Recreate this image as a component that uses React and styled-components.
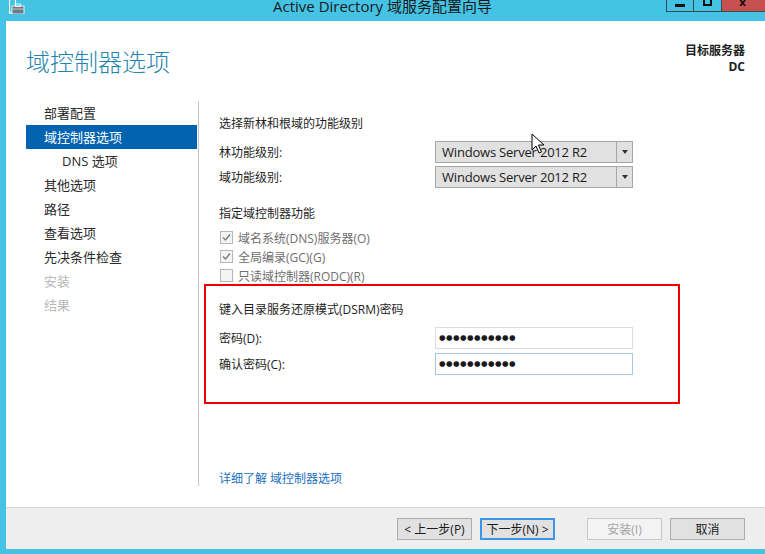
import React from 'react';
import styled, { createGlobalStyle } from 'styled-components';

const GlobalStyle = createGlobalStyle`
  html, body {
    margin: 0;
    padding: 0;
    overflow: hidden;
    background: #45c3e4;
  }
  * {
    box-sizing: border-box;
  }
`;

const SANS = `"Open Sans", "Noto Sans CJK SC", sans-serif`;

const Window = styled.div`
  position: relative;
  width: 765px;
  height: 554px;
  display: flex;
  flex-direction: column;
  background: #45c3e4;
  font-family: ${SANS};
  color: #1e1e1e;
  overflow: hidden;
`;

const TitleBar = styled.div`
  height: 21px;
  display: grid;
  grid-template-columns: 1fr auto 1fr;
  align-items: start;
`;

const TitleIcon = styled.svg`
  margin-left: 9px;
  display: block;
`;

const TitleText = styled.div`
  font-size: 15px;
  line-height: 15px;
  margin-top: -1px;
  color: #1a1a1a;
  white-space: nowrap;
`;

const Controls = styled.div`
  justify-self: end;
  display: flex;
  height: 12px;
  margin-right: -3px;
`;

const CtrlButton = styled.div`
  width: ${p => p.$w}px;
  height: 12px;
  background: ${p => (p.$close ? '#c75050' : '#45c3e4')};
  border: 1px solid #3c4a50;
  border-top: none;
  border-left: ${p => (p.$first ? '1px solid #3c4a50' : 'none')};
  display: flex;
  justify-content: center;
  align-items: flex-start;
`;

const MinGlyph = styled.span`
  width: 10px;
  height: 3px;
  margin-top: 4px;
  background: #111;
`;

const MaxGlyph = styled.span`
  width: 9px;
  height: 6px;
  border: 2px solid #111;
  border-top: none;
`;

const CloseGlyph = styled.span`
  font-family: "DejaVu Sans", sans-serif;
  font-weight: bold;
  font-size: 11px;
  line-height: 6px;
  color: #111;
  margin-left: -4px;
  overflow: hidden;
  height: 7px;
`;

const Body = styled.div`
  flex: 1;
  margin: 0 0 5px 6px;
  background: #ffffff;
  display: flex;
  flex-direction: column;
`;

const Header = styled.div`
  height: 80px;
  padding: 0 20px;
  display: flex;
  justify-content: space-between;
  align-items: flex-start;
`;

const PageTitle = styled.h1`
  margin: 25px 0 0 0;
  font-size: 24px;
  line-height: 30px;
  font-weight: 300;
  color: #1f84ae;
  font-family: "Noto Sans CJK SC", sans-serif;
`;

const Target = styled.div`
  margin-top: 22px;
  text-align: right;
  font-size: 12px;
  line-height: 16px;
  font-weight: bold;
  color: #1e1e1e;
`;

const Main = styled.div`
  flex: 1;
  display: flex;
`;

const Nav = styled.div`
  width: 193px;
  padding: 0 1px 0 20px;
  margin-bottom: 21px;
  border-right: 1px solid #c6c6c6;
`;

const NavItem = styled.div`
  height: 24px;
  line-height: 24px;
  font-size: 13px;
  padding-left: ${p => (p.$indent ? 36 : 18)}px;
  background: ${p => (p.$active ? '#0063b1' : 'transparent')};
  color: ${p => (p.$active ? '#ffffff' : p.$disabled ? '#b8b8b8' : '#2a2a2a')};
  white-space: nowrap;
`;

const Content = styled.div`
  flex: 1;
  display: flex;
  flex-direction: column;
  padding: 13px 0 18px 20px;
`;

const SectionTitle = styled.div`
  font-size: 12px;
  line-height: 20px;
  margin-top: ${p => p.$mt || 0}px;
`;

const FieldRow = styled.div`
  display: grid;
  grid-template-columns: 216px 198px;
  align-items: center;
  height: 22px;
  margin-top: ${p => p.$mt || 0}px;
  font-size: 12px;
`;

const Select = styled.div`
  height: 22px;
  display: flex;
  background: #e1e1e1;
  border: 1px solid #a6a6a6;
`;

const SelectValue = styled.div`
  flex: 1;
  padding-left: 6px;
  font-size: 13px;
  line-height: 20px;
  color: #1a1a1a;
  font-family: "Open Sans", sans-serif;
  letter-spacing: -0.2px;
`;

const SelectArrow = styled.div`
  width: 16px;
  border-left: 1px solid #a6a6a6;
  display: flex;
  align-items: center;
  justify-content: center;
  &::after {
    content: '';
    border-left: 3.5px solid transparent;
    border-right: 3.5px solid transparent;
    border-top: 4px solid #333;
  }
`;

const CheckRow = styled.div`
  height: 19px;
  display: flex;
  align-items: center;
  gap: 5px;
  padding-left: 1px;
  font-size: 12px;
  color: #6e6e6e;
  margin-top: ${p => p.$mt || 0}px;
`;

const Box = styled.span`
  width: 13px;
  height: 13px;
  border: 1px solid #b6b6b6;
  background: #f4f4f4;
  display: flex;
  align-items: center;
  justify-content: center;
`;

const Highlight = styled.div`
  margin: -1px 0 0 -15px;
  width: 476px;
  height: 120px;
  border: 2px solid #f00000;
  padding: 14px 0 0 13px;
`;

const Password = styled.div`
  height: 22px;
  border: 1px solid ${p => (p.$focus ? '#a6c8e6' : '#d8dde4')};
  background: #fff;
  padding-left: 3px;
  font-family: "DejaVu Sans", sans-serif;
  font-size: 7.5px;
  letter-spacing: 0.45px;
  line-height: 20px;
  color: #1a1a1a;
`;

const HelpLink = styled.a`
  margin-top: auto;
  font-size: 12px;
  line-height: 20px;
  color: #2270c0;
  text-decoration: none;
`;

const Footer = styled.div`
  height: 42px;
  border-top: 1px solid #d9d9d9;
  background: #eeeeee;
  display: flex;
  justify-content: flex-end;
  padding: 10px 20px 0 0;
`;

const Button = styled.div`
  width: 75px;
  height: 22px;
  margin-left: ${p => p.$gap}px;
  display: flex;
  align-items: center;
  justify-content: center;
  font-size: 12px;
  background: ${p => (p.$disabled ? '#f3f3f3' : '#e1e1e1')};
  color: ${p => (p.$disabled ? '#a3a3a3' : '#1a1a1a')};
  border: 1px solid ${p => (p.$focus ? '#3c96e8' : p.$disabled ? '#c8c8c8' : '#adadad')};
  ${p => (p.$focus ? 'box-shadow: inset 0 0 0 1px #3c96e8;' : '')}
  white-space: nowrap;
`;

const Cursor = styled.svg`
  position: absolute;
  left: 531px;
  top: 133px;
`;

const Check = () => (
  <svg width="11" height="11" viewBox="0 0 11 11">
    <path d="M2 5.5 L4.5 8 L9 2.5" fill="none" stroke="#7a7a7a" strokeWidth="1.4" />
  </svg>
);

const navItems = [
  { label: '部署配置' },
  { label: '域控制器选项', active: true },
  { label: 'DNS 选项', indent: true },
  { label: '其他选项' },
  { label: '路径' },
  { label: '查看选项' },
  { label: '先决条件检查' },
  { label: '安装', disabled: true },
  { label: '结果', disabled: true },
];

const DOTS = '●●●●●●●●●●●';

const App = () => (
  <Window>
    <GlobalStyle />
    <TitleBar>
      <TitleIcon width="18" height="14" viewBox="0 0 18 14">
        <rect x="0.5" y="-1" width="6" height="14" fill="none" stroke="#fff" strokeWidth="1.2" />
        <rect x="3" y="6" width="12" height="8" fill="#6b7c86" stroke="#fff" strokeWidth="0.8" />
        <rect x="6.5" y="4" width="5" height="2.5" fill="none" stroke="#fff" strokeWidth="0.8" />
        <line x1="3" y1="9" x2="15" y2="9" stroke="#cfd6da" strokeWidth="0.8" />
      </TitleIcon>
      <TitleText>Active Directory 域服务配置向导</TitleText>
      <Controls>
        <CtrlButton $w={28} $first>
          <MinGlyph />
        </CtrlButton>
        <CtrlButton $w={28}>
          <MaxGlyph />
        </CtrlButton>
        <CtrlButton $w={46} $close>
          <CloseGlyph>x</CloseGlyph>
        </CtrlButton>
      </Controls>
    </TitleBar>

    <Body>
      <Header>
        <PageTitle>域控制器选项</PageTitle>
        <Target>
          <div>目标服务器</div>
          <div>DC</div>
        </Target>
      </Header>

      <Main>
        <Nav>
          {navItems.map(item => (
            <NavItem
              key={item.label}
              $active={item.active}
              $indent={item.indent}
              $disabled={item.disabled}
            >
              {item.label}
            </NavItem>
          ))}
        </Nav>

        <Content>
          <SectionTitle>选择新林和根域的功能级别</SectionTitle>
          <FieldRow $mt={7}>
            <span>林功能级别:</span>
            <Select>
              <SelectValue>Windows Server 2012 R2</SelectValue>
              <SelectArrow />
            </Select>
          </FieldRow>
          <FieldRow $mt={3}>
            <span>域功能级别:</span>
            <Select>
              <SelectValue>Windows Server 2012 R2</SelectValue>
              <SelectArrow />
            </Select>
          </FieldRow>

          <SectionTitle $mt={16}>指定域控制器功能</SectionTitle>
          <CheckRow $mt={4}>
            <Box><Check /></Box>
            域名系统(DNS)服务器(O)
          </CheckRow>
          <CheckRow>
            <Box><Check /></Box>
            全局编录(GC)(G)
          </CheckRow>
          <CheckRow>
            <Box />
            只读域控制器(RODC)(R)
          </CheckRow>

          <Highlight>
            <SectionTitle>键入目录服务还原模式(DSRM)密码</SectionTitle>
            <FieldRow $mt={7}>
              <span>密码(D):</span>
              <Password>{DOTS}</Password>
            </FieldRow>
            <FieldRow $mt={4}>
              <span>确认密码(C):</span>
              <Password $focus>{DOTS}</Password>
            </FieldRow>
          </Highlight>

          <HelpLink href="#">详细了解 域控制器选项</HelpLink>
        </Content>
      </Main>

      <Footer>
        <Button $gap={0}>&lt; 上一步(P)</Button>
        <Button $gap={8} $focus>下一步(N) &gt;</Button>
        <Button $gap={32} $disabled>安装(I)</Button>
        <Button $gap={8}>取消</Button>
      </Footer>
    </Body>

    <Cursor width="14" height="22" viewBox="0 0 14 22">
      <path d="M1 1 L1 17 L5 13 L8 20 L10.5 19 L7.5 12 L13 12 Z" fill="#fff" stroke="#000" strokeWidth="1" strokeLinejoin="round" />
    </Cursor>
  </Window>
);

export default App;
